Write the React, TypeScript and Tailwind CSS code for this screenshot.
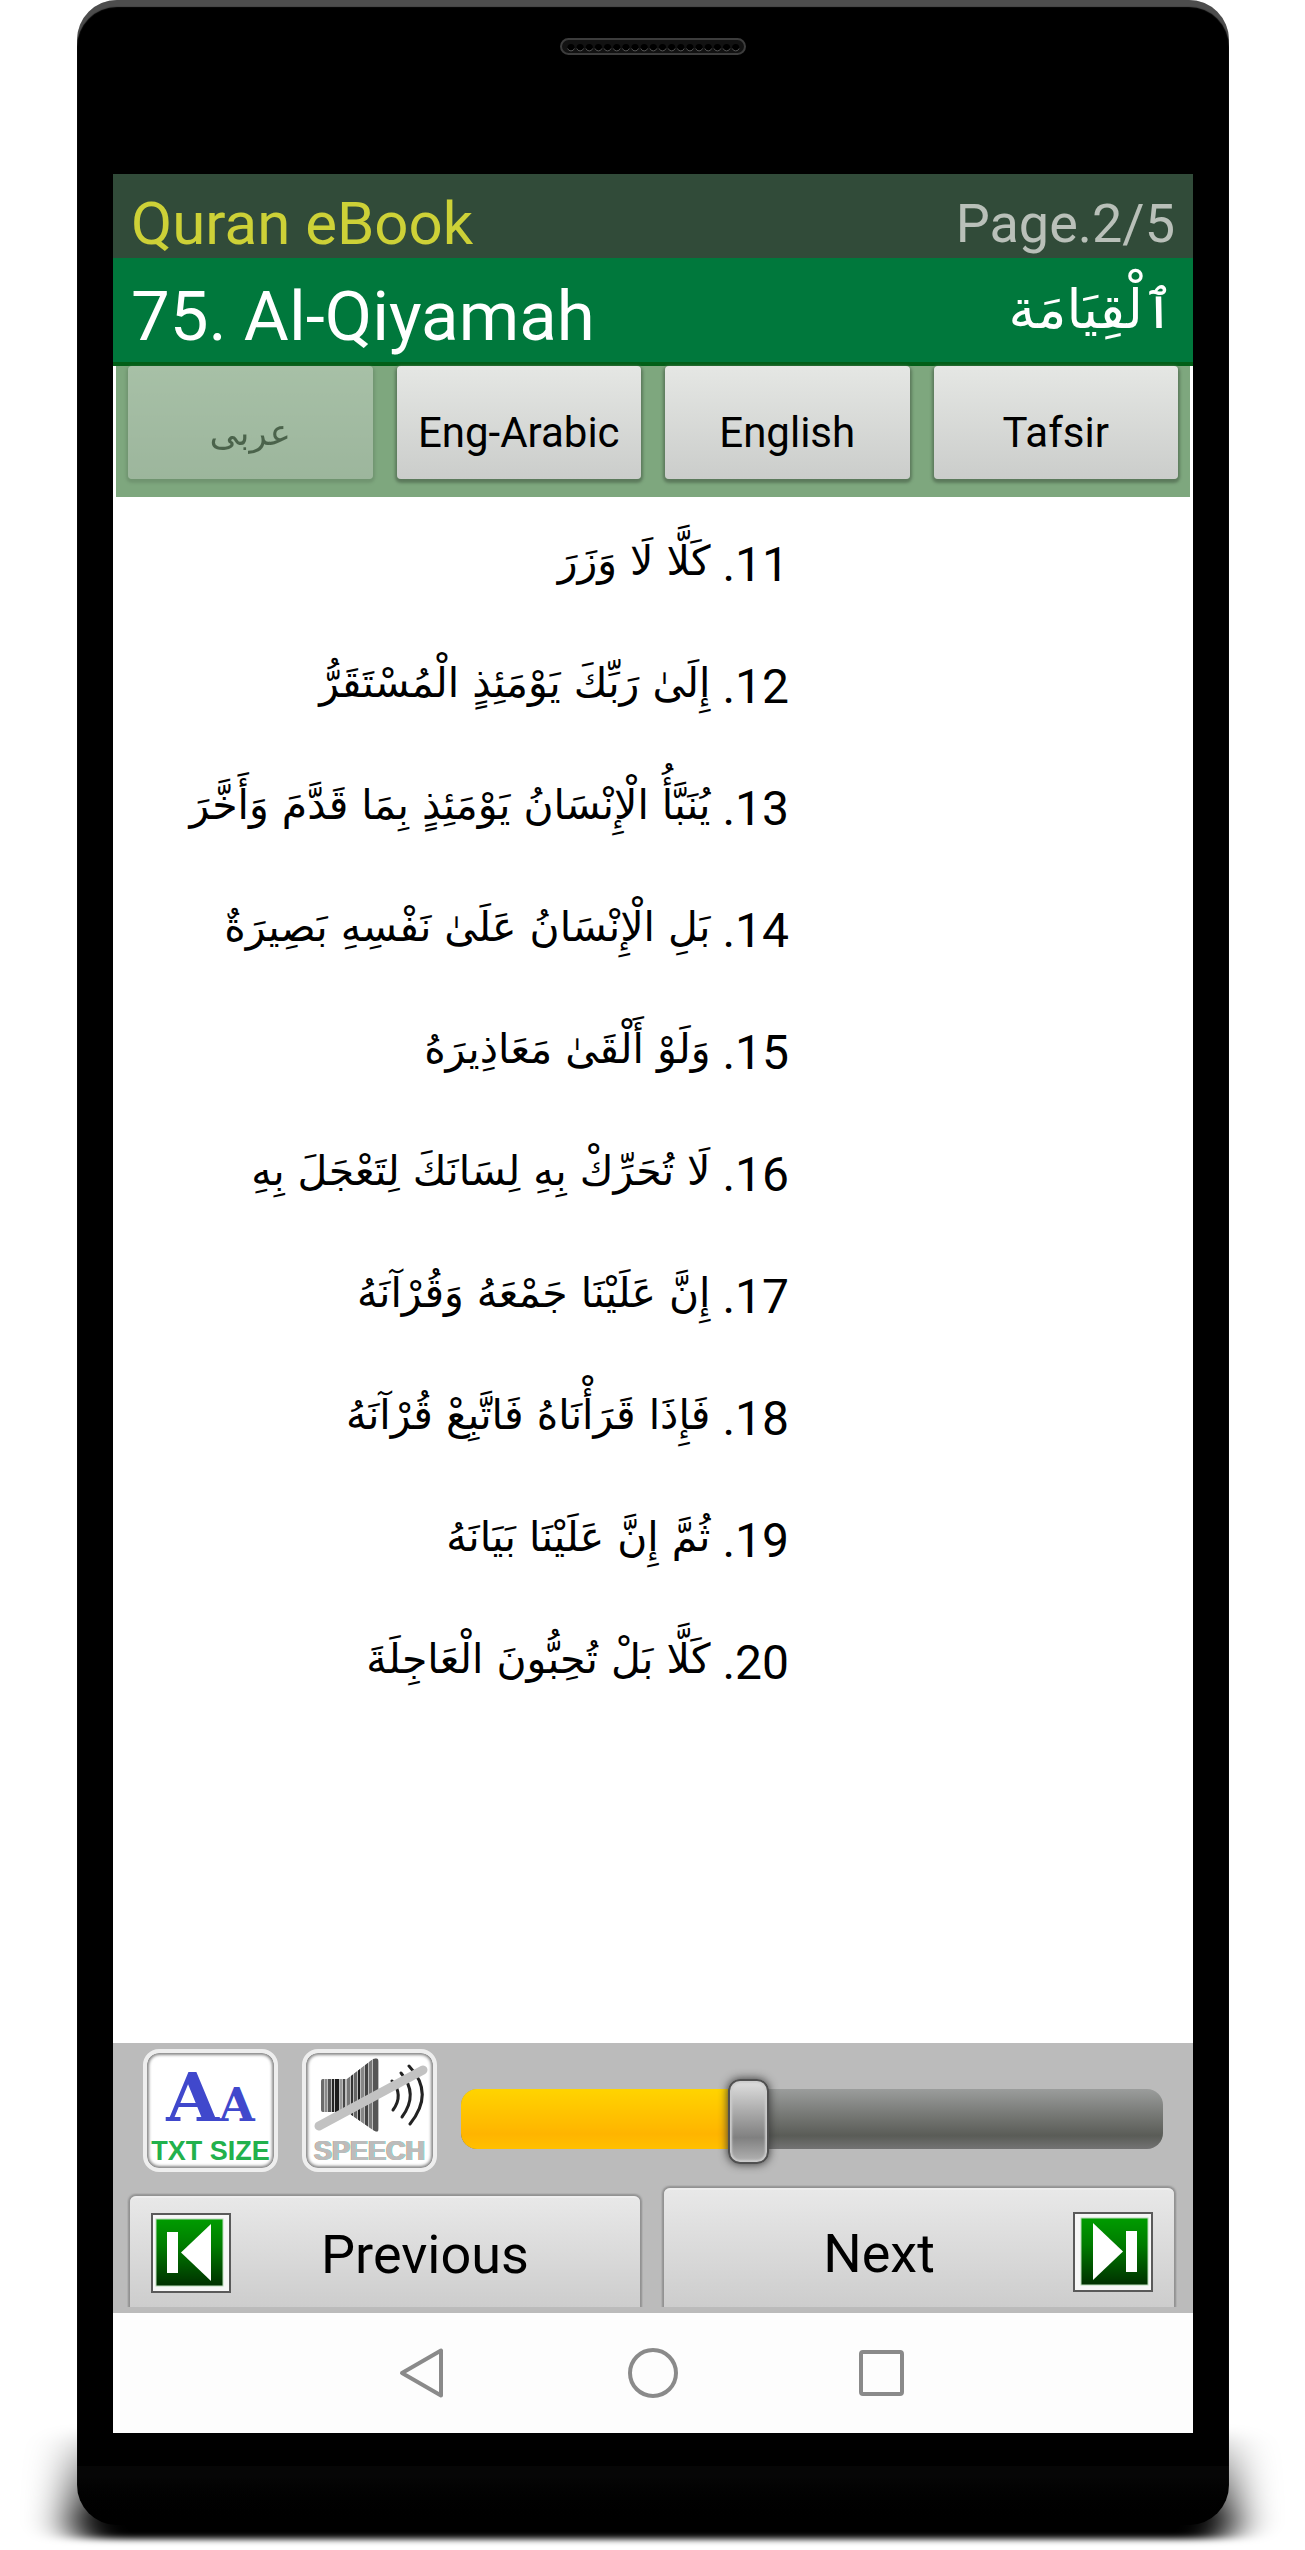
import { useState } from "react";

type Verse = { n: number; text: string };

const verses: Verse[] = [
  { n: 11, text: "كَلَّا لَا وَزَرَ" },
  { n: 12, text: "إِلَىٰ رَبِّكَ يَوْمَئِذٍ الْمُسْتَقَرُّ" },
  { n: 13, text: "يُنَبَّأُ الْإِنْسَانُ يَوْمَئِذٍ بِمَا قَدَّمَ وَأَخَّرَ" },
  { n: 14, text: "بَلِ الْإِنْسَانُ عَلَىٰ نَفْسِهِ بَصِيرَةٌ" },
  { n: 15, text: "وَلَوْ أَلْقَىٰ مَعَاذِيرَهُ" },
  { n: 16, text: "لَا تُحَرِّكْ بِهِ لِسَانَكَ لِتَعْجَلَ بِهِ" },
  { n: 17, text: "إِنَّ عَلَيْنَا جَمْعَهُ وَقُرْآنَهُ" },
  { n: 18, text: "فَإِذَا قَرَأْنَاهُ فَاتَّبِعْ قُرْآنَهُ" },
  { n: 19, text: "ثُمَّ إِنَّ عَلَيْنَا بَيَانَهُ" },
  { n: 20, text: "كَلَّا بَلْ تُحِبُّونَ الْعَاجِلَةَ" },
];

const tabs = [
  { label: "عربی", font: "font-['DejaVu_Sans',sans-serif] text-[36px]" },
  { label: "Eng-Arabic", font: "text-[42px]" },
  { label: "English", font: "text-[42px]" },
  { label: "Tafsir", font: "text-[42px]" },
];

// widths of the thin bars that shade the speaker icon
const speakerBars = [
  { x: 19, w: 3, c: "#6b6b6b" },
  { x: 23, w: 2, c: "#8a8a8a" },
  { x: 26, w: 3, c: "#555555" },
  { x: 30, w: 2, c: "#222222" },
  { x: 33, w: 4, c: "#1a1a1a" },
  { x: 38, w: 2, c: "#999999" },
  { x: 41, w: 2, c: "#444444" },
  { x: 45, w: 3, c: "#777777" },
  { x: 49, w: 2, c: "#333333" },
  { x: 52, w: 3, c: "#666666" },
  { x: 56, w: 2, c: "#222222" },
  { x: 59, w: 3, c: "#888888" },
  { x: 63, w: 3, c: "#444444" },
  { x: 67, w: 3, c: "#777777" },
  { x: 71, w: 5, c: "#555555" },
];

function SpeakerGrill() {
  return (
    <svg className="mx-auto mt-[38px] block h-[17px] w-[186px]" viewBox="0 0 186 17" aria-hidden="true">
      <rect x="1" y="1" width="184" height="15" rx="7.5" fill="#121212" stroke="#3c3c3c" strokeWidth="2" />
      {Array.from({ length: 19 }, (_, i) => (
        <g key={i}>
          <circle cx={11 + i * 9.15} cy="9.5" r="3.6" fill="#000" />
          <path d={`M${7.6 + i * 9.15} 10.5a3.6 3.6 0 0 0 6.8 0`} fill="none" stroke="#555" strokeWidth="1" />
        </g>
      ))}
    </svg>
  );
}

function FloorShadow() {
  return (
    <svg className="absolute inset-x-0 bottom-0 h-[140px] w-full" aria-hidden="true">
      <defs>
        <linearGradient id="floor" x1="0" y1="0" x2="0" y2="1">
          <stop offset="0" stopColor="#000" stopOpacity="0" />
          <stop offset="0.5" stopColor="#000" stopOpacity="0.6" />
          <stop offset="0.8" stopColor="#000" stopOpacity="1" />
          <stop offset="1" stopColor="#000" />
        </linearGradient>
        <filter id="soften" x="-10%" y="-20%" width="120%" height="140%">
          <feGaussianBlur stdDeviation="22 3" />
        </filter>
      </defs>
      <rect x="5.5%" y="16" width="89%" height="113" rx="20" fill="url(#floor)" filter="url(#soften)" />
    </svg>
  );
}

function StepIcon({ flip }: { flip?: boolean }) {
  return (
    <svg className={flip ? "size-20 shrink-0 -scale-x-100" : "size-20 shrink-0"} viewBox="0 0 80 80" aria-hidden="true">
      <defs>
        <linearGradient id="stepGreen" x1="0" y1="0" x2="0" y2="1">
          <stop offset="0" stopColor="#009c00" />
          <stop offset="0.4" stopColor="#007c00" />
          <stop offset="1" stopColor="#003000" />
        </linearGradient>
      </defs>
      <rect x="1" y="1" width="78" height="78" fill="#f7f7f7" stroke="#5a5a5a" strokeWidth="2" />
      <rect x="5" y="6" width="67" height="67" fill="url(#stepGreen)" stroke="#b9dcb9" strokeWidth="1" />
      <rect x="16" y="19" width="11" height="41" fill="#fff" />
      <path d="M30 39.5 60 11v57z" fill="#fff" />
    </svg>
  );
}

function MutedSpeaker() {
  return (
    <svg className="h-[84px] w-full" viewBox="4 0 127 84" aria-hidden="true">
      <clipPath id="horn">
        <path d="M21 26h24L71 6q6-2 6 3v66q0 6-6 2L45 59H21q-2 0-2-3V29q0-3 2-3z" />
      </clipPath>
      <g clipPath="url(#horn)">
        <rect x="18" y="0" width="60" height="80" fill="#bdbdbd" />
        {speakerBars.map((b) => (
          <rect key={b.x} x={b.x} y="0" width={b.w} height="80" fill={b.c} />
        ))}
      </g>
      <g fill="none" stroke="#222" strokeWidth="3" strokeLinecap="round">
        <path d="M90 28q12 14 1 29" />
        <path d="M99 20q18 21 1 44" />
        <path d="M107 13q26 27 1 58" />
      </g>
      <path d="M17 73 121 17" stroke="#c2c2c2" strokeWidth="9" strokeLinecap="round" />
    </svg>
  );
}

export default function App() {
  const [tab, setTab] = useState(0);
  const [size, setSize] = useState(40);

  const toolButton =
    "flex h-[123px] w-[135px] shrink-0 flex-col items-center rounded-2xl border-4 border-[#eeeeee] bg-white shadow-[inset_0_0_3px_2px_#888888]";
  const stepButton =
    "flex flex-1 items-center rounded-t-md border-t-2 border-[#eeeeee] bg-linear-to-b from-[#e8e8e8] to-[#cdcdcd] px-[21px] shadow-[0_0_2px_2px_#909090] [clip-path:inset(-3px_-3px_0_-3px)]";

  return (
    <div className="relative bg-white pr-[76px] pb-[25px] pl-[77px] font-[Roboto,sans-serif]">
      <FloorShadow />

      <div className="relative rounded-[40px] bg-black bg-linear-to-t from-black via-[#060606] via-[48px] to-[#060606] to-[59px] bg-[length:100%_59px] bg-bottom bg-no-repeat px-9 pb-[92px] shadow-[inset_0_7px_1px_#4d4d4d]">
        <div className="h-[174px] overflow-hidden">
          <SpeakerGrill />
        </div>

        <main className="bg-white">
          {/* Title bars */}
          <header>
            <div className="flex h-[84px] items-center justify-between bg-[#314b39] px-[18px] pt-[15px]">
              <span className="text-[60px] leading-none text-[#cdd137]">Quran eBook</span>
              <span className="text-[54px] leading-none text-[#b9c0b9]">Page.2/5</span>
            </div>
            <div className="flex h-[108px] items-center justify-between border-b-4 border-[#025f17] bg-[#00783c] px-[18px] pt-3 text-white">
              <h1 className="text-[69px] leading-none">75. Al-Qiyamah</h1>
              <span lang="ar" dir="rtl" className="pb-3 font-['DejaVu_Sans',sans-serif] text-[54px] leading-none">
                ٱلْقِيَامَة
              </span>
            </div>
          </header>

          <nav className="mx-[3px] flex h-[131px] items-start gap-6 bg-[#7ea77e] px-3">
            {tabs.map((t, i) => (
              <button
                key={t.label}
                type="button"
                disabled={i === tab}
                onClick={() => setTab(i)}
                className="h-[113px] flex-1 basis-0 rounded-sm bg-linear-to-b from-[#e5e7e4] to-[#cbcdcb] pt-5 leading-none text-black shadow-[0_2px_3px_2px_#5c7a5c] disabled:opacity-40"
              >
                <span className={t.font}>{t.label}</span>
              </button>
            ))}
          </nav>

          {/* Verses */}
          <ol dir="rtl" lang="ar" className="min-h-[1546px] pt-[7px] pr-[404px] text-black">
            {verses.map((v) => (
              <li key={v.n} className="flex h-[122px] items-center whitespace-nowrap">
                <span className="text-[48px] leading-none">{v.n}.&nbsp;</span>
                <span className="pb-2 font-['DejaVu_Sans',sans-serif] text-[41px] leading-none">{v.text}</span>
              </li>
            ))}
          </ol>

          {/* Controls */}
          <section className="bg-[#bbbbbb] pt-[6px] pb-[6px]">
            <div className="flex items-start gap-6 px-[30px]">
              <button type="button" className={toolButton}>
                <span className="flex h-[84px] items-baseline font-['DejaVu_Serif',serif] leading-[88px] font-bold text-[#4048cc]">
                  <span className="text-[68px]">A</span>
                  <span className="text-[46px]">A</span>
                </span>
                <span className="font-['Liberation_Sans',sans-serif] text-[27px] leading-7 font-bold whitespace-nowrap text-[#22b14c]">
                  TXT SIZE
                </span>
              </button>

              <button type="button" className={toolButton}>
                <span className="flex h-[84px] w-full items-center">
                  <MutedSpeaker />
                </span>
                <span className="font-['Liberation_Sans',sans-serif] text-[27px] leading-7 font-bold text-[#bcbcbc] [text-shadow:-1px_0_#c8a890,1px_0_#80d0c8]">
                  SPEECH
                </span>
              </button>

              <div className="relative mt-[30px] h-[85px] flex-1">
                <div className="absolute inset-x-0 top-[10px] h-[60px] overflow-hidden rounded-2xl bg-linear-to-b from-[#9b9d9c] via-[#5a5c57] via-78% to-[#737373]">
                  <div
                    className="h-full bg-linear-to-b from-[#ffd400] via-[#ffb400] via-75% to-[#ffc000]"
                    style={{ width: `${size + 2}%` }}
                  />
                </div>
                <input
                  type="range"
                  aria-label="Text size"
                  min={0}
                  max={99}
                  value={size}
                  onChange={(e) => setSize(Number(e.target.value))}
                  className="absolute inset-0 h-full w-full appearance-none bg-transparent [&::-webkit-slider-thumb]:h-[85px] [&::-webkit-slider-thumb]:w-[41px] [&::-webkit-slider-thumb]:appearance-none [&::-webkit-slider-thumb]:rounded-xl [&::-webkit-slider-thumb]:border-2 [&::-webkit-slider-thumb]:border-[#505050] [&::-webkit-slider-thumb]:bg-linear-to-b [&::-webkit-slider-thumb]:from-[#e0e0e0] [&::-webkit-slider-thumb]:via-[#808080] [&::-webkit-slider-thumb]:via-70% [&::-webkit-slider-thumb]:to-[#b4b4b4] [&::-webkit-slider-thumb]:shadow-[inset_0_0_2px_2px_#cccccc,0_0_10px_#333333]"
                />
              </div>
            </div>

            <div className="mt-4 flex h-[119px] items-end gap-6 pr-[19px] pl-[17px] text-[54px] leading-none text-black">
              <button type="button" className={`${stepButton} h-[111px]`}>
                <StepIcon />
                <span className="flex-1 pt-1">Previous</span>
              </button>
              <button type="button" className={`${stepButton} h-[119px] pt-[6px]`}>
                <span className="flex-1 pt-1">Next</span>
                <StepIcon flip />
              </button>
            </div>
          </section>

          {/* System bar */}
          <footer className="flex h-[120px] items-center justify-center gap-[180px] bg-[#fdfdfd] text-[#8a8a8a]">
            <button type="button" aria-label="Back">
              <svg className="h-[52px] w-[50px]" viewBox="0 0 50 52" fill="none" stroke="currentColor" strokeWidth="4" strokeLinejoin="round">
                <path d="M43 3.500v45L4 26z" />
              </svg>
            </button>
            <button type="button" aria-label="Home">
              <svg className="h-[52px] w-[50px]" viewBox="0 0 50 52" fill="none" stroke="currentColor" strokeWidth="4">
                <circle cx="25" cy="26" r="23" />
              </svg>
            </button>
            <button type="button" aria-label="Recent apps">
              <svg className="h-[52px] w-[50px]" viewBox="0 0 50 52" fill="none" stroke="currentColor" strokeWidth="4">
                <rect x="3" y="5" width="41" height="42" rx="2" />
              </svg>
            </button>
          </footer>
        </main>
      </div>
    </div>
  );
}
